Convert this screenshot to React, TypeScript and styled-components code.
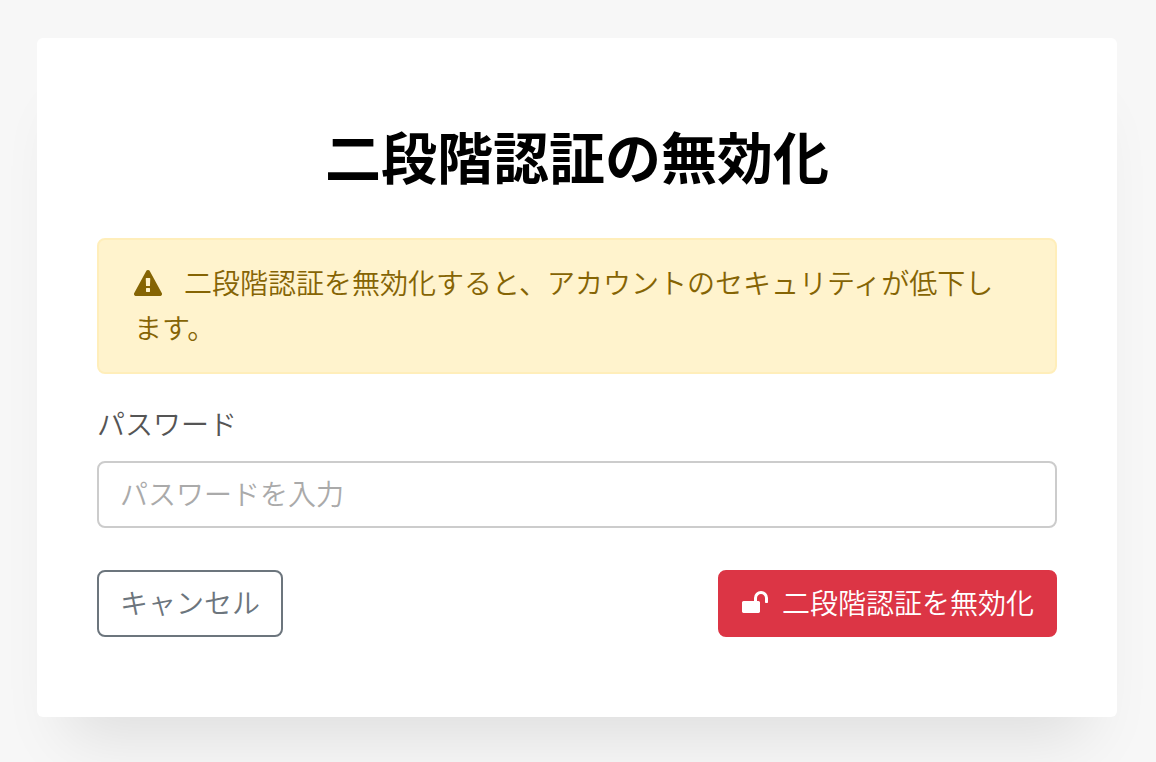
import React from "react";
import styled, { createGlobalStyle } from "styled-components";

const GlobalStyle = createGlobalStyle`
  *, *::before, *::after { box-sizing: border-box; }
  body {
    margin: 0;
    background: #f7f7f7;
    color: #000;
    font-family: "Noto Sans CJK JP", sans-serif;
    font-size: 28px;
    font-weight: 350;
    line-height: 43px;
  }
`;

const Page = styled.main`
  padding: 38px 39px 45px 37px;
`;

const Card = styled.section`
  padding: 80px 60px;
  border-radius: 6px;
  background: #fff;
  box-shadow: 0 50px 60px -30px rgba(0, 0, 0, 0.1);
`;

const Title = styled.h1`
  margin: 0 0 46px;
  font-size: 56px;
  font-weight: 700;
  line-height: 74px;
  text-align: center;
`;

const Alert = styled.div`
  margin-bottom: 28px;
  padding: 20px 35px 22px;
  border: 2px solid #ffeeba;
  border-radius: 8px;
  background: #fff3cd;
  color: #856404;
  line-height: 45px;
`;

const Icon = styled.svg`
  flex: none;
  width: 28px;
  height: 28px;
  fill: currentColor;
`;

const WarningIcon = styled(Icon)`
  margin-right: 22px;
  vertical-align: -4px;
`;

const Field = styled.div`
  display: flex;
  flex-direction: column;
  gap: 16px;
  margin-bottom: 42px;
`;

const Label = styled.label`
  color: #555;
`;

const Input = styled.input`
  width: 100%;
  height: 67px;
  padding: 8px 21px 12px;
  border: 2px solid #ccc;
  border-radius: 8px;
  background: #fff;
  color: #555;
  font: inherit;
  &::placeholder { color: #aaa; opacity: 1; }
`;

const Actions = styled.div`
  display: flex;
  justify-content: space-between;
`;

const Button = styled.button<{ $danger?: boolean }>`
  display: flex;
  align-items: center;
  gap: 13px;
  padding: 9px 21px 11px;
  border: 2px solid ${(p) => (p.$danger ? "#dc3545" : "#6c757d")};
  border-radius: 8px;
  background: ${(p) => (p.$danger ? "#dc3545" : "#fff")};
  color: ${(p) => (p.$danger ? "#fff" : "#6c757d")};
  font: inherit;
  cursor: pointer;
`;

export default function App() {
  return (
    <>
      <GlobalStyle />
      <Page>
        <Card>
          <Title>二段階認証の無効化</Title>
          <Alert role="alert">
            <WarningIcon viewBox="0 0 1792 1792" aria-hidden="true">
              <path d="M1024 1375v-190q0-14-9.5-23.5T992 1152H800q-13 0-22.5 9.5T768 1185v190q0 14 9.5 23.5t22.5 9.5h192q13 0 22.5-9.5t9.5-23.5zm-2-374l18-459q0-12-10-19-13-11-24-11H786q-11 0-24 11-10 7-10 21l17 457q0 10 10 16.5t24 6.5h185q14 0 23.5-6.5t10.5-16.5zm-14-934l768 1408q35 63-2 126-17 29-46.5 46t-63.5 17H128q-34 0-63.5-17T18 1601q-37-63-2-126L784 67q17-31 47-49t65-18 65 18 47 49z" />
            </WarningIcon>
            二段階認証を無効化すると、アカウントのセキュリティが低下します。
          </Alert>
          <form onSubmit={(e) => e.preventDefault()}>
            <Field>
              <Label htmlFor="password">パスワード</Label>
              <Input id="password" type="password" placeholder="パスワードを入力" />
            </Field>
            <Actions>
              <Button type="button">キャンセル</Button>
              <Button type="submit" $danger>
                <Icon viewBox="0 0 1792 1792" aria-hidden="true">
                  <path d="M1728 576v256q0 26-19 45t-45 19h-64q-26 0-45-19t-19-45V576q0-106-75-181t-181-75-181 75-75 181v192h96q40 0 68 28t28 68v576q0 40-28 68t-68 28H160q-40 0-68-28t-28-68V864q0-40 28-68t68-28h672V576q0-185 131.5-316.5T1280 128t316.5 131.5T1728 576z" />
                </Icon>
                二段階認証を無効化
              </Button>
            </Actions>
          </form>
        </Card>
      </Page>
    </>
  );
}
